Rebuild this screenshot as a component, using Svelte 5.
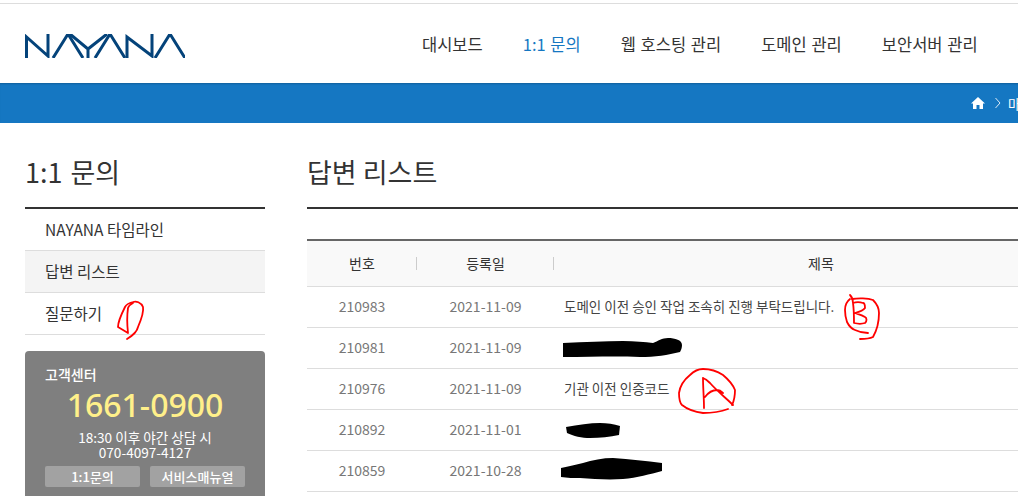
<script>
  const menu = ['대시보드', '1:1 문의', '웹 호스팅 관리', '도메인 관리', '보안서버 관리', '커뮤니티'];
  const side = ['NAYANA 타임라인', '답변 리스트', '질문하기'];
  const rows = [
    { no: '210983', date: '2021-11-09', title: '도메인 이전 승인 작업 조속히 진행 부탁드립니다.' },
    { no: '210981', date: '2021-11-09', title: '' },
    { no: '210976', date: '2021-11-09', title: '기관 이전 인증코드' },
    { no: '210892', date: '2021-11-01', title: '' },
    { no: '210859', date: '2021-10-28', title: '' }
  ];
</script>

<div class="page">
  <header>
    <svg class="logo" width="160" height="24" viewBox="0 0 160 24" fill="none" stroke="#04437a" stroke-width="3">
      <path d="M1.5 24V3L23 22V0" />
      <path d="M28 24L43 0L58 24" />
      <path d="M45 0L63 15V24M63 15L82 0" />
      <path d="M70 24L85 0L100 24" />
      <path d="M102 24V3L127 22V0" />
      <path d="M130 24L145 0L160 24" />
    </svg>
    <nav>
      {#each menu as item, i}
        <a href="#top" class:on={i === 1}>{item}</a>
      {/each}
    </nav>
  </header>

  <div class="band">
    <svg width="14" height="12" viewBox="0 0 14 12"><path d="M7 0L14 6.5H12V12H8.5V8H5.5V12H2V6.5H0Z" fill="#fff" /></svg>
    <svg width="6" height="12" viewBox="0 0 6 12" fill="none" stroke="#dbe9f5"><path d="M.5 1L5 6L.5 11" /></svg>
    <span>마이페이지</span>
  </div>

  <div class="content">
    <aside>
      <h2>1:1 문의</h2>
      <ul>
        {#each side as item, i}
          <li class:current={i === 1}>{item}</li>
        {/each}
      </ul>
      <div class="support">
        <div class="label">고객센터</div>
        <div class="phone">1661-0900</div>
        <div class="night">18:30 이후 야간 상담 시<br />070-4097-4127</div>
        <div class="btns">
          <span>1:1문의</span>
          <span>서비스매뉴얼</span>
        </div>
      </div>
    </aside>

    <main>
      <h2>답변 리스트</h2>
      <div class="gap"></div>
      <div class="thead">
        <div class="c1">번호</div>
        <div class="c2">등록일</div>
        <div class="c3">제목</div>
      </div>
      {#each rows as row}
        <div class="row">
          <div class="c1">{row.no}</div>
          <div class="c2">{row.date}</div>
          <div class="c3">{row.title}</div>
        </div>
      {/each}
    </main>
  </div>

  <!-- red pen marks and black scribbles drawn over the screenshot -->
  <svg class="marks" width="1018" height="496" viewBox="0 0 1018 496" fill="none">
    <g stroke="#f00" stroke-width="1.8" stroke-linecap="round" stroke-linejoin="round">
      <path d="M127 339C132 336 137 332 138 327C141 320 144 312 143 307C141 302 136 301 133 302C129 303 126 305 125 307C122 313 118 322 118 327L128 333C127 324 127 315 128 308C129 305 131 304 133 303" />
      <path d="M850 295C852 297 853 300 853 303C854 310 854 317 854 323C858 324 862 324 865 323C867 321 867 318 865 317C862 315 858 314 855 313C859 312 863 311 865 308C865 305 865 303 863 303C860 302 856 302 853 303" />
      <path d="M850 299C846 302 845 306 845 310C845 315 846 319 847 322C849 326 852 329 855 330C859 332 864 333 868 333M852 299C858 298 868 298 873 300C877 304 879 308 879 313C879 321 877 330 873 337C869 339 864 339 860 339" />
      <path d="M728 409C720 412 711 413 703 413C695 412 687 409 682 405C679 402 679 397 679 393C680 386 685 379 690 375C694 371 699 369 703 369C710 369 717 371 723 375C729 380 733 385 735 390C735 396 734 401 732 405" />
      <path d="M703 378C703 388 704 398 704 408M703 378C706 379 708 381 710 383C717 391 726 398 733 405M705 397C708 393 713 390 717 390C719 390 721 391 723 393" />
    </g>
    <g fill="#000">
      <path d="M563 343C585 342 605 341 623 341C635 341 645 342 653 343C658 341 662 338 668 338C675 338 682 340 682 345C682 348 681 350 680 352C668 355 655 357 640 357C615 356 590 357 563 357Z" />
      <path d="M566 427C578 425 590 423 600 423C607 423 614 424 620 426L619 435C610 437 600 438 590 438C582 438 573 436 567 433Z" />
      <path d="M561 468C569 466 576 465 583 463C592 460 603 458 613 458C630 459 646 461 662 463V471C650 474 637 478 623 479C608 480 594 479 580 478C574 478 567 478 561 477Z" />
    </g>
  </svg>
</div>

<style>
  :global(body) {
    margin: 0;
  }
  .page {
    position: relative;
    width: 1018px;
    height: 496px;
    overflow: hidden;
    background: #fff;
    font-family: "Noto Sans CJK KR", "Noto Sans", sans-serif;
    color: #333;
  }
  header {
    margin-top: 3px;
    border-top: 1px solid #ddd;
    height: 79px;
    padding-left: 25px;
    display: flex;
    align-items: center;
  }
  .logo {
    flex: none;
    margin-top: 4px;
  }
  nav {
    flex: none;
    margin-left: 237px;
    display: flex;
    gap: 40px;
    white-space: nowrap;
    word-spacing: 1px;
  }
  nav a {
    font-size: 16.5px;
    color: #333;
    text-decoration: none;
  }
  nav a.on {
    color: #1577c2;
  }
  .band {
    height: 40px;
    background: #1577c2;
    box-shadow: inset 0 2px 2px -1px rgba(0, 0, 0, 0.2);
    display: flex;
    align-items: center;
    padding-left: 971px;
    gap: 10px;
    white-space: nowrap;
    color: #fff;
    font-size: 13px;
  }
  .band svg {
    flex: none;
  }
  .band span {
    flex: none;
    margin-left: -3px;
  }
  .content {
    display: flex;
    padding-left: 25px;
    gap: 42px;
  }
  aside {
    flex: none;
    width: 240px;
  }
  h2 {
    margin: 0;
    height: 86px;
    padding-top: 28px;
    box-sizing: border-box;
    font-size: 27px;
    line-height: 42px;
    font-weight: 400;
    color: #333;
    border-bottom: 2px solid #333;
  }
  aside h2 {
    word-spacing: 2px;
  }
  ul {
    list-style: none;
    margin: 0;
    padding: 0;
  }
  li {
    height: 42px;
    box-sizing: border-box;
    border-bottom: 1px solid #ddd;
    padding-left: 20px;
    font-size: 15.5px;
    line-height: 41px;
  }
  li.current {
    background: #f4f4f4;
  }
  .support {
    margin-top: 16px;
    height: 170px;
    box-sizing: border-box;
    background: #7f7f7f;
    border-radius: 4px;
    padding: 13px 20px 0;
    color: #fff;
    text-align: center;
  }
  .label {
    text-align: left;
    font-size: 14px;
    line-height: 20px;
    font-weight: 500;
  }
  .phone {
    margin-top: 2px;
    font-size: 32px;
    line-height: 38px;
    font-weight: 500;
    color: #fff08a;
    font-family: "Noto Sans", sans-serif;
  }
  .night {
    margin-top: 6px;
    font-size: 13.6px;
    line-height: 15px;
  }
  .btns {
    margin-top: 6px;
    display: flex;
    justify-content: space-between;
  }
  .btns span {
    width: 95px;
    height: 21px;
    background: #a2a2a2;
    border-radius: 2px;
    font-size: 13px;
    font-weight: 500;
    line-height: 21px;
  }
  main {
    flex: none;
    width: 800px;
  }
  .gap {
    height: 30px;
  }
  .thead,
  .row {
    display: flex;
    align-items: center;
    box-sizing: border-box;
    border-bottom: 1px solid #ddd;
    padding-bottom: 2px;
  }
  .thead {
    height: 48px;
    background: #f9f9f9;
    border-top: 2px solid #666;
    font-size: 14px;
    color: #333;
  }
  .row {
    height: 41px;
    font-size: 14px;
    color: #777;
  }
  .c1 {
    width: 110px;
    text-align: center;
  }
  .c2 {
    width: 137px;
    text-align: center;
  }
  .c3 {
    flex: 1;
    padding-left: 10px;
    color: #444;
    font-size: 13.5px;
  }
  .thead .c1,
  .thead .c2 {
    position: relative;
  }
  .thead .c1::after,
  .thead .c2::after {
    content: "";
    position: absolute;
    right: 0;
    top: 4px;
    height: 13px;
    border-right: 1px solid #ccc;
  }
  .thead .c3 {
    padding: 0;
    width: 534px;
    flex: none;
    text-align: center;
    color: #333;
    font-size: 14px;
  }
  .marks {
    position: absolute;
    left: 0;
    top: 0;
    pointer-events: none;
  }
</style>
